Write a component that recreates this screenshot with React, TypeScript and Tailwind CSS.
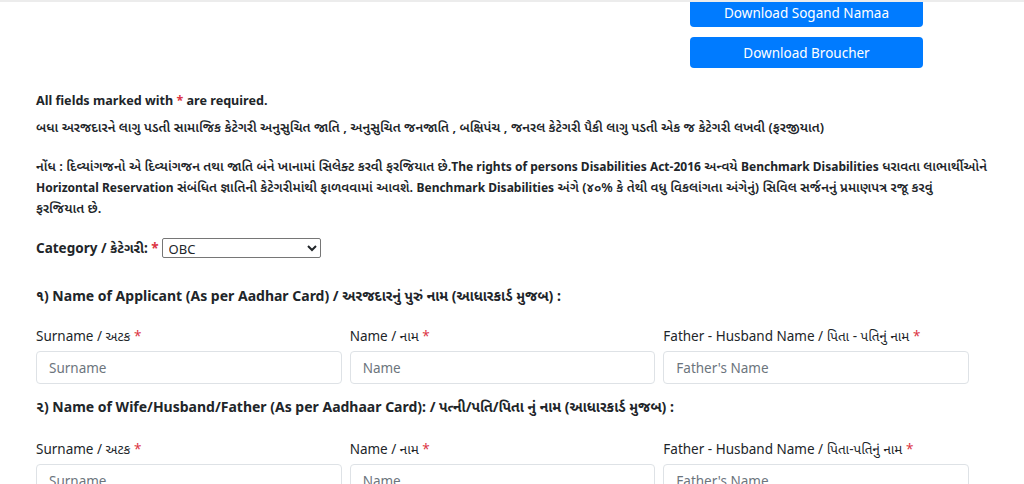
const FONT = "font-['Noto_Sans','Noto_Sans_Gujarati','Open_Sans',sans-serif]";

function Req() {
  return <span className="text-[#dc3545]">*</span>;
}

function En({ children }: { children: React.ReactNode }) {
  return <b className="text-[12px] font-bold">{children}</b>;
}

interface FieldProps {
  label: string;
  placeholder: string;
}

function Field({ label, placeholder }: FieldProps) {
  return (
    <div className="flex flex-col">
      <label className="text-[13.5px] leading-[20px] mb-[5px]">
        {label} <Req />
      </label>
      <input
        type="text"
        placeholder={placeholder}
        className="h-[33px] w-full px-3 text-[13.5px] border border-[#dee2e6] rounded-[4px] placeholder:text-[#6c757d] outline-none"
      />
    </div>
  );
}

export default function App() {
  return (
    <div className={`min-h-screen bg-white border-t-2 border-[#ececec] text-[#212529] overflow-hidden ${FONT}`}>
      <div className="flex justify-end pr-[101px]">
        <div className="flex flex-col gap-[10px] w-[233px] -mt-[6px]">
          <button className="h-[31px] pt-[3px] bg-[#007bff] text-white text-[13.5px] rounded-[4px]">Download Sogand Namaa</button>
          <button className="h-[31px] pt-[2px] bg-[#007bff] text-white text-[13.5px] rounded-[4px]">Download Broucher</button>
        </div>
      </div>

      <div className="pl-[36px] pr-[48px]">
        <p className="mt-[22px] text-[12.6px] leading-[21px] font-bold">
          All fields marked with <Req /> are required.
        </p>
        <p className="mt-[6px] text-[13.2px] leading-[21px] font-semibold">
          બધા અરજદારને લાગુ પડતી સામાજિક કેટેગરી અનુસુચિત જાતિ , અનુસુચિત જનજાતિ , બક્ષિપંચ , જનરલ કેટેગરી પૈકી લાગુ પડતી એક જ કેટેગરી લખવી (ફરજીયાત)
        </p>
        <p className="mt-[18px] -mr-[40px] text-[13.2px] leading-[21px] font-semibold">
          નોંધ : દિવ્યાંગજનો એ દિવ્યાંગજન તથા જાતિ બંને ખાનામાં સિલેક્ટ કરવી ફરજિયાત છે.
          <En>The rights of persons Disabilities Act-2016</En> અન્વયે <En>Benchmark Disabilities</En> ધરાવતા લાભાર્થીઓને
          <br />
          <En>Horizontal Reservation</En> સંબંધિત જ્ઞાતિની કેટેગરીમાંથી ફાળવવામાં આવશે. <En>Benchmark Disabilities</En> અંગે (૪૦% કે તેથી વધુ વિકલાંગતા અંગેનું) સિવિલ સર્જનનું પ્રમાણપત્ર રજૂ કરવું
          <br />
          ફરજિયાત છે.
        </p>

        <div className="mt-[19px] flex items-center gap-[3px]">
          <span className="text-[13.5px] font-bold">
            Category / કેટેગરી: <Req />
          </span>
          <select defaultValue="OBC" className="h-[20px] w-[159px] border border-[#767676] rounded-[2px] text-[13px] px-[2px] bg-white">
            <option>OBC</option>
            <option>SC</option>
            <option>ST</option>
            <option>General</option>
          </select>
        </div>

        <h3 className="mt-[27px] text-[14px] leading-[22px] font-bold">
          ૧) Name of Applicant (As per Aadhar Card) / અરજદારનું પુરું નામ (આધારકાર્ડ મુજબ) :
        </h3>
        <div className="mt-[19px] grid grid-cols-3 gap-[8px] pr-[7px]">
          <Field label="Surname / અટક" placeholder="Surname" />
          <Field label="Name / નામ" placeholder="Name" />
          <Field label="Father - Husband Name / પિતા - પતિનું નામ" placeholder="Father's Name" />
        </div>

        <h3 className="mt-[12px] text-[14px] leading-[22px] font-bold">
          ૨) Name of Wife/Husband/Father (As per Aadhaar Card): / પત્ની/પતિ/પિતા નું નામ (આધારકાર્ડ મુજબ) :
        </h3>
        <div className="mt-[21px] grid grid-cols-3 gap-[8px] pr-[7px]">
          <Field label="Surname / અટક" placeholder="Surname" />
          <Field label="Name / નામ" placeholder="Name" />
          <Field label="Father - Husband Name / પિતા-પતિનું નામ" placeholder="Father's Name" />
        </div>
      </div>
    </div>
  );
}
